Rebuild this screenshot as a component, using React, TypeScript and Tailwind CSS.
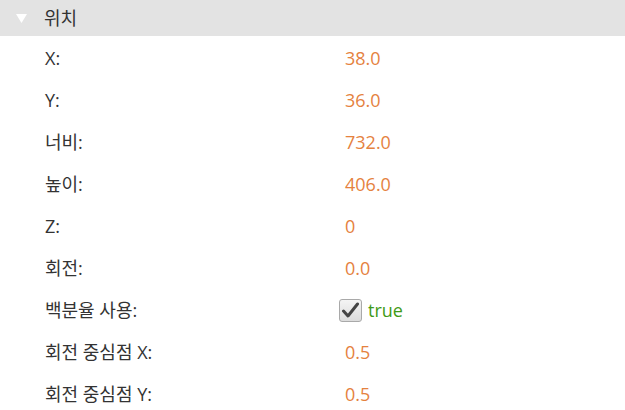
import React from 'react';

type Row = { label: string; value?: string; check?: boolean };

const rows: Row[] = [
  { label: 'X:', value: '38.0' },
  { label: 'Y:', value: '36.0' },
  { label: '너비:', value: '732.0' },
  { label: '높이:', value: '406.0' },
  { label: 'Z:', value: '0' },
  { label: '회전:', value: '0.0' },
  { label: '백분율 사용:', check: true },
  { label: '회전 중심점 X:', value: '0.5' },
  { label: '회전 중심점 Y:', value: '0.5' },
];

const Checkbox = () => (
  <div className="w-[23px] h-[23px] rounded-[3px] border border-[#a9a9a9] bg-gradient-to-b from-[#f4f4f4] to-[#dcdcdc] flex items-center justify-center">
    <svg width="19" height="17" viewBox="0 0 19 17">
      <path d="M2.5 9 L7 14 L16.5 2" fill="none" stroke="#444" strokeWidth="3" strokeLinecap="round" strokeLinejoin="round" />
    </svg>
  </div>
);

export default function App() {
  return (
    <div
      className="w-[625px] h-[410px] bg-white overflow-hidden text-[18px] text-[#333]"
      style={{ fontFamily: '"Open Sans", "Noto Sans CJK KR", sans-serif' }}
    >
      <div className="h-[36px] bg-[#e3e3e3] flex items-center">
        <svg className="ml-[16px]" width="11" height="9" viewBox="0 0 11 9">
          <path d="M0 0 H11 L5.5 9 Z" fill="#fff" />
        </svg>
        <span className="ml-[17px]">위치</span>
      </div>
      <div className="pt-px">
        {rows.map((r) => (
          <div key={r.label} className="h-[42px] flex items-center">
            <div className="w-[345px] pl-[45px]">{r.label}</div>
            {r.check ? (
              <div className="flex items-center gap-[6px] -ml-[6px]">
                <Checkbox />
                <span className="text-[#3f9a16]">true</span>
              </div>
            ) : (
              <div className="text-[#e5823f]">{r.value}</div>
            )}
          </div>
        ))}
      </div>
    </div>
  );
}
